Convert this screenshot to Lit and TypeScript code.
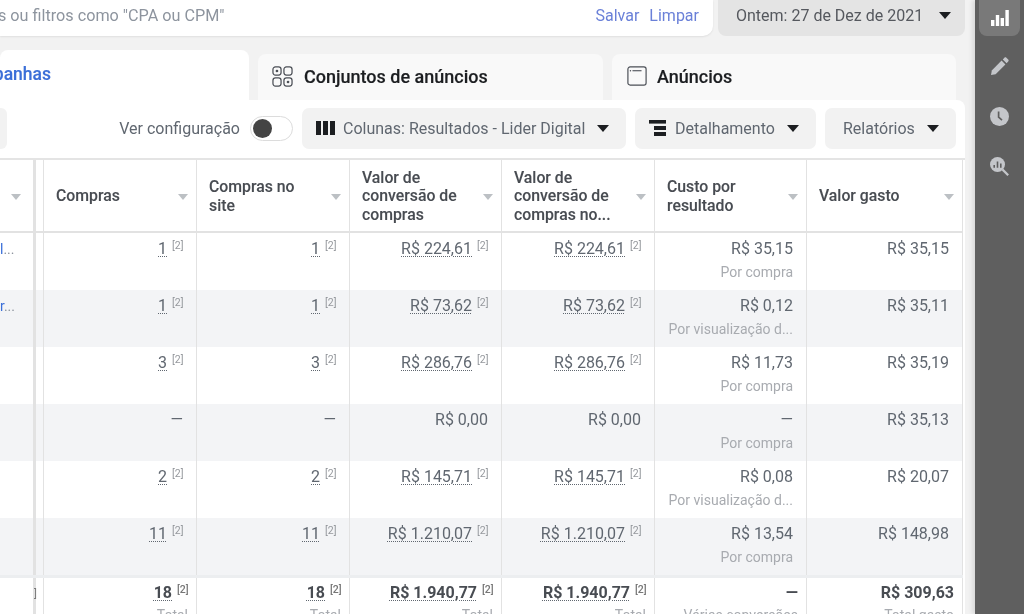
import { LitElement, css, html, nothing } from 'lit';
import { customElement } from 'lit/decorators.js';

interface Row {
  compras: string;
  site: string;
  valor: string;
  custo: string;
  sub: string;
  gasto: string;
  stub?: string;
  marked: boolean;
}

const rows: Row[] = [
  { compras: '1', site: '1', valor: 'R$ 224,61', custo: 'R$ 35,15', sub: 'Por compra', gasto: 'R$ 35,15', stub: 'l', marked: true },
  { compras: '1', site: '1', valor: 'R$ 73,62', custo: 'R$ 0,12', sub: 'Por visualização d...', gasto: 'R$ 35,11', stub: 'r', marked: true },
  { compras: '3', site: '3', valor: 'R$ 286,76', custo: 'R$ 11,73', sub: 'Por compra', gasto: 'R$ 35,19', marked: true },
  { compras: '—', site: '—', valor: 'R$ 0,00', custo: '—', sub: 'Por compra', gasto: 'R$ 35,13', marked: false },
  { compras: '2', site: '2', valor: 'R$ 145,71', custo: 'R$ 0,08', sub: 'Por visualização d...', gasto: 'R$ 20,07', marked: true },
  { compras: '11', site: '11', valor: 'R$ 1.210,07', custo: 'R$ 13,54', sub: 'Por compra', gasto: 'R$ 148,98', marked: true },
];

const headers = [
  'Compras',
  'Compras no site',
  'Valor de conversão de compras',
  'Valor de conversão de compras no...',
  'Custo por resultado',
  'Valor gasto',
];

@customElement('app-root')
export class AppRoot extends LitElement {
  private caret() {
    return html`<span class="caret"></span>`;
  }

  private marked(value: string, on: boolean) {
    if (!on) return html`<span class="val">${value}</span>`;
    return html`<span class="val"><u>${value}</u><sup>[2]</sup></span>`;
  }

  private renderRow(r: Row, i: number) {
    return html`
      <div class="row ${i % 2 ? 'alt' : ''}">
        <div class="cell stub">${r.stub ? html`<span><b>${r.stub}</b>...</span>` : nothing}</div>
        <div class="band"></div>
        <div class="cell">${this.marked(r.compras, r.marked)}</div>
        <div class="cell">${this.marked(r.site, r.marked)}</div>
        <div class="cell">${this.marked(r.valor, r.marked)}</div>
        <div class="cell">${this.marked(r.valor, r.marked)}</div>
        <div class="cell"><span class="val">${r.custo}</span><span class="sub">${r.sub}</span></div>
        <div class="cell"><span class="val">${r.gasto}</span></div>
      </div>
    `;
  }

  render() {
    return html`
      <div class="main">
        <div class="top">
          <div class="search">
            <span class="hint">s ou filtros como "CPA ou CPM"</span>
            <span class="links"><a>Salvar</a><a>Limpar</a></span>
          </div>
          <div class="date">Ontem: 27 de Dez de 2021 ${this.caret()}</div>
        </div>

        <div class="tabs">
          <div class="tab active"><span>panhas</span></div>
          <div class="tab second">
            <svg width="21" height="21" viewBox="0 0 22 22" fill="none" stroke="#4b4f56" stroke-width="1.3">
              <rect x="1" y="1" width="8.5" height="8.5" rx="2.6"></rect>
              <rect x="12.5" y="1" width="8.5" height="8.5" rx="2.6"></rect>
              <rect x="1" y="12.5" width="8.5" height="8.5" rx="2.6"></rect>
              <rect x="12.5" y="12.5" width="8.5" height="8.5" rx="2.6"></rect>
              <circle cx="5.2" cy="5.2" r="1.4" fill="#4b4f56" stroke="none"></circle>
              <circle cx="16.8" cy="16.8" r="1.4" fill="#4b4f56" stroke="none"></circle>
            </svg>
            <span>Conjuntos de anúncios</span>
          </div>
          <div class="tab third">
            <svg width="20" height="20" viewBox="0 0 22 22" fill="none" stroke="#4b4f56" stroke-width="1.3">
              <rect x="1" y="1" width="20" height="20" rx="2.4"></rect>
              <path d="M6 5.2h10" stroke-width="1.2"></path>
              <circle cx="3.8" cy="5.2" r=".8" fill="#4b4f56" stroke="none"></circle>
            </svg>
            <span>Anúncios</span>
          </div>
        </div>

        <div class="panel">
          <div class="toolbar">
            <div class="stub-btn"></div>
            <div class="tools">
              <span class="config">Ver configuração</span>
              <span class="toggle"><i></i></span>
              <div class="btn colunas">
                <svg width="19" height="14" viewBox="0 0 19 14" fill="#1c1e21">
                  <rect width="5" height="14"></rect>
                  <rect x="7" width="5" height="14"></rect>
                  <rect x="14" width="5" height="14"></rect>
                </svg>
                <span>Colunas: Resultados - Lider Digital</span>${this.caret()}
              </div>
              <div class="btn detalhe">
                <svg width="17" height="16" viewBox="0 0 17 16" fill="#1c1e21">
                  <rect width="17" height="3.6"></rect>
                  <rect x="5" y="6" width="12" height="4"></rect>
                  <rect x="5" y="12" width="12" height="4"></rect>
                </svg>
                <span>Detalhamento</span>${this.caret()}
              </div>
              <div class="btn relatorios"><span>Relatórios</span>${this.caret()}</div>
            </div>
          </div>

          <div class="table">
            <div class="row head">
              <div class="cell stub"><span class="hcaret"></span></div>
              <div class="band"></div>
              ${headers.map(
                (h) => html`<div class="cell"><span class="title">${h}</span><span class="hcaret"></span></div>`,
              )}
            </div>
            ${rows.map((r, i) => this.renderRow(r, i))}
            <div class="row foot">
              <div class="cell stub"></div>
              <div class="band"><em>]</em></div>
              <div class="cell"><span class="val"><u>18</u><sup>[2]</sup></span><span class="sub">Total</span></div>
              <div class="cell"><span class="val"><u>18</u><sup>[2]</sup></span><span class="sub">Total</span></div>
              <div class="cell"><span class="val"><u>R$ 1.940,77</u><sup>[2]</sup></span><span class="sub">Total</span></div>
              <div class="cell"><span class="val"><u>R$ 1.940,77</u><sup>[2]</sup></span><span class="sub">Total</span></div>
              <div class="cell"><span class="val">—</span><span class="sub">Várias conversões</span></div>
              <div class="cell"><span class="val">R$ 309,63</span><span class="sub">Total gasto</span></div>
            </div>
          </div>
        </div>
      </div>

      <div class="side">
        <div class="side-item on">
          <svg width="18" height="16" viewBox="0 0 18 16" fill="#fff">
            <rect x="0" y="10" width="3.4" height="6"></rect>
            <rect x="4.8" y="5" width="3.4" height="11"></rect>
            <rect x="9.6" y="8" width="3.4" height="8"></rect>
            <rect x="14.4" y="0" width="3.4" height="16"></rect>
          </svg>
        </div>
        <div class="side-item">
          <svg width="18" height="18" viewBox="0 0 18 18" fill="#c4c6ca">
            <path d="M0 18l.8-4.6L10.6 3.6l3.8 3.8L4.6 17.2z"></path>
            <path d="M11.8 2.4l1.6-1.6c.6-.6 1.4-.6 2 0l1.8 1.8c.6.6.6 1.4 0 2l-1.6 1.6z"></path>
          </svg>
        </div>
        <div class="side-item">
          <svg width="19" height="19" viewBox="0 0 19 19">
            <circle cx="9.5" cy="9.5" r="9.5" fill="#c4c6ca"></circle>
            <path d="M8.6 4.5v5.6l3.4 3" fill="none" stroke="#5f5f5f" stroke-width="1.7"></path>
          </svg>
        </div>
        <div class="side-item">
          <svg width="19" height="19" viewBox="0 0 19 19" fill="none">
            <circle cx="7.5" cy="7.5" r="7.5" fill="#c4c6ca"></circle>
            <path d="M4.2 8v2.8M7.5 4.4v6.4M10.8 6.6v4.2" stroke="#5f5f5f" stroke-width="1.6"></path>
            <path d="M12.6 12.6l5.6 5.6" stroke="#c4c6ca" stroke-width="2.2"></path>
          </svg>
        </div>
      </div>
    `;
  }

  static styles = css`
    :host {
      display: flex;
      width: 1024px;
      height: 614px;
      overflow: hidden;
      background: #f2f2f2;
      font-family: Roboto, 'Liberation Sans', sans-serif;
      font-size: 16px;
      color: #606770;
      filter: blur(0.55px);
    }

    .main {
      width: 975px;
      flex: none;
      display: flex;
      flex-direction: column;
    }

    .top {
      flex: none;
      display: flex;
      height: 36px;
      gap: 5px;
      padding-right: 10px;
    }

    .search {
      width: 713px;
      display: flex;
      align-items: center;
      justify-content: space-between;
      padding: 0 14px 6px 0;
      box-sizing: border-box;
      background: #fff;
      border-radius: 0 0 10px 0;
      box-shadow: 0 1px 2px rgba(0, 0, 0, 0.08);
    }

    .hint {
      margin-left: -2px;
      font-size: 16.2px;
      color: #8d949e;
    }

    .links {
      display: flex;
      gap: 10px;
      color: #6a80d8;
    }

    .date {
      flex: 1;
      display: flex;
      align-items: center;
      justify-content: space-between;
      padding: 0 14px 6px 18px;
      background: #e4e4e4;
      border-radius: 0 0 8px 8px;
      color: #55585e;
    }

    .caret {
      flex: none;
      width: 0;
      height: 0;
      border-left: 6px solid transparent;
      border-right: 6px solid transparent;
      border-top: 7px solid #1c1e21;
    }

    .tabs {
      flex: none;
      display: flex;
      align-items: flex-end;
      gap: 9px;
      height: 50px;
      margin-top: 14px;
      padding-right: 19px;
    }

    .tab {
      display: flex;
      align-items: center;
      gap: 11px;
      height: 46px;
      box-sizing: border-box;
      padding: 0 0 2px 14px;
      background: #f9f9f9;
      border-radius: 8px 8px 0 0;
      font-size: 18px;
      font-weight: 500;
      white-space: nowrap;
      color: #1c1e21;
      -webkit-text-stroke: 0.15px #1c1e21;
    }

    .tab.active {
      width: 249px;
      height: 50px;
      padding: 0 198px 2px 0;
      justify-content: flex-end;
      background: #fff;
      font-size: 17.5px;
      color: #3b6fd8;
      -webkit-text-stroke: 0.15px #3b6fd8;
    }

    .tab.second {
      width: 345px;
    }

    .tab.third {
      width: 344px;
      padding-left: 15px;
      gap: 10px;
    }

    .panel {
      flex: none;
      width: 965px;
      background: #fff;
      border-radius: 0 8px 0 0;
    }

    .toolbar {
      display: flex;
      justify-content: space-between;
      align-items: center;
      height: 60px;
      box-sizing: border-box;
      border-bottom: 2px solid #e4e4e4;
      padding: 0 9px 2px 0;
    }

    .stub-btn {
      width: 7px;
      height: 41px;
      background: #f2f2f2;
      border-radius: 0 6px 6px 0;
    }

    .tools {
      display: flex;
      align-items: center;
      gap: 9px;
    }

    .config {
      margin-right: 1px;
      white-space: nowrap;
    }

    .toggle {
      display: flex;
      align-items: center;
      width: 43px;
      height: 25px;
      box-sizing: border-box;
      padding-left: 2px;
      border: 1px solid #dcdcdc;
      border-radius: 13px;
      background: #fff;
    }

    .toggle i {
      width: 19px;
      height: 19px;
      border-radius: 50%;
      background: #444;
    }

    .btn {
      display: flex;
      align-items: center;
      height: 41px;
      box-sizing: border-box;
      background: #f2f2f2;
      border-radius: 7px;
      padding: 0 17px 0 14px;
      white-space: nowrap;
    }

    .btn span:not(.caret) {
      flex: 1;
    }

    .colunas {
      width: 324px;
      gap: 8px;
    }

    .detalhe {
      width: 181px;
      gap: 9px;
    }

    .relatorios {
      width: 131px;
      padding-left: 18px;
    }

    .row {
      display: grid;
      grid-template-columns: 33px 11px 153px 153px 152px 153px 152px 156px;
      width: 963px;
      height: 57px;
    }

    .row.alt {
      background: #f3f4f6;
    }

    .band {
      position: relative;
      box-sizing: border-box;
      border-left: 3px solid #e2e2e2;
      border-right: 1px solid #e2e2e2;
    }

    .band em {
      position: absolute;
      left: -2px;
      top: 9px;
      font-style: normal;
      font-size: 11px;
      color: #777;
    }

    .cell {
      position: relative;
      display: flex;
      flex-direction: column;
      align-items: flex-end;
      box-sizing: border-box;
      padding: 6px 13px 0 0;
      border-right: 1px solid #e2e2e2;
      line-height: 20px;
      white-space: nowrap;
    }

    .cell.stub {
      align-items: flex-start;
      padding: 6px 0 0 0;
      border-right: none;
      color: #8d949e;
      font-size: 14px;
    }

    .cell.stub b {
      font-weight: 400;
      color: #3b6fd8;
    }

    .val {
      display: inline-flex;
      align-items: flex-start;
    }

    u {
      text-decoration: underline dotted #606770 1px;
      text-underline-offset: 2px;
    }

    sup {
      font-size: 10.5px;
      line-height: 14px;
      width: 11px;
      margin-left: 5px;
      color: #95989d;
    }

    .sub {
      margin-top: 3px;
      font-size: 14px;
      color: #a8abb0;
    }

    .head {
      height: 73px;
      border-bottom: 2px solid #e2e2e2;
      box-sizing: border-box;
      font-size: 15.8px;
      font-weight: 500;
    }

    .head .cell {
      flex-direction: row;
      align-items: center;
      justify-content: space-between;
      padding: 2px 8px 0 12px;
      white-space: normal;
      line-height: 18.5px;
      color: #484c52;
    }

    .head .cell.stub {
      padding: 2px 0 0 11px;
      justify-content: flex-start;
    }

    .title {
      width: 112px;
      -webkit-text-stroke: 0.1px #484c52;
    }

    .hcaret {
      flex: none;
      width: 0;
      height: 0;
      margin-top: 1px;
      border-left: 5.5px solid transparent;
      border-right: 5.5px solid transparent;
      border-top: 6px solid #bcc0c4;
    }

    .foot {
      border-top: 3px solid #eceef0;
      height: 60px;
      box-sizing: border-box;
    }

    .foot .cell {
      padding: 5px 8px 0 0;
    }

    .foot .val,
    .foot u {
      font-weight: 700;
      color: #484c52;
    }

    .foot .sub {
      margin-top: 2px;
    }

    .foot sup {
      font-size: 10.5px;
      font-weight: 500;
      color: #777;
    }

    .side {
      flex: 1;
      display: flex;
      flex-direction: column;
      align-items: center;
      background: #5f5f5f;
      box-shadow: -3px 0 4px rgba(0, 0, 0, 0.1);
    }

    .side-item {
      flex: none;
      width: 41px;
      height: 36px;
      display: flex;
      align-items: center;
      justify-content: center;
      margin-bottom: 14px;
    }

    .side-item.on {
      background: #797979;
      border-radius: 0 0 8px 8px;
      margin-bottom: 12px;
    }
  `;
}

declare global {
  interface HTMLElementTagNameMap {
    'app-root': AppRoot;
  }
}
